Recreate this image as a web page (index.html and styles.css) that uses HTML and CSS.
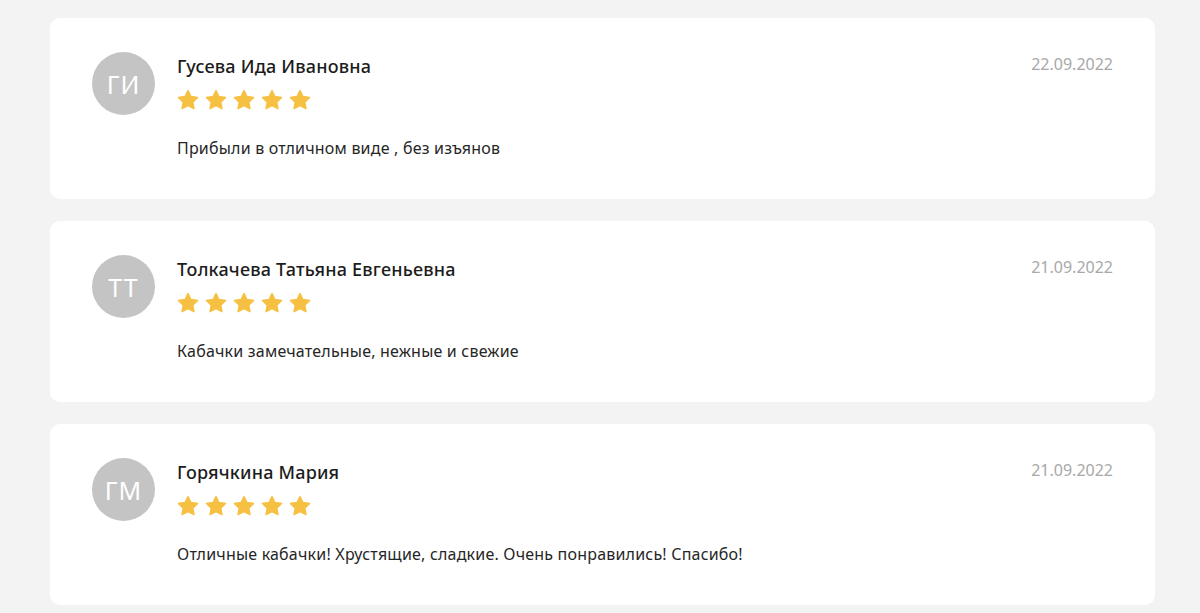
FILE: index.html
```html
<!DOCTYPE html>
<html lang="ru">
<head>
<meta charset="utf-8">
<link rel="stylesheet" href="styles.css">
</head>
<body>
<svg width="0" height="0" class="defs">
  <defs>
    <symbol id="star" viewBox="0 0 24 24">
      <path d="M12 1.6l3.2 6.6 7.2 1-5.2 5.1 1.3 7.2L12 18.1l-6.5 3.4 1.3-7.2-5.2-5.1 7.2-1z" stroke-linejoin="round" stroke-width="1.6" stroke="#f6c142" fill="#f6c142"/>
    </symbol>
  </defs>
</svg>
<div class="list">
  <div class="card">
    <div class="avatar">ГИ</div>
    <div class="body">
      <div class="name">Гусева Ида Ивановна</div>
      <div class="stars"><svg><use href="#star"/></svg><svg><use href="#star"/></svg><svg><use href="#star"/></svg><svg><use href="#star"/></svg><svg><use href="#star"/></svg></div>
      <div class="text">Прибыли в отличном виде , без изъянов</div>
    </div>
    <div class="date">22.09.2022</div>
  </div>
  <div class="card">
    <div class="avatar">ТТ</div>
    <div class="body">
      <div class="name">Толкачева Татьяна Евгеньевна</div>
      <div class="stars"><svg><use href="#star"/></svg><svg><use href="#star"/></svg><svg><use href="#star"/></svg><svg><use href="#star"/></svg><svg><use href="#star"/></svg></div>
      <div class="text">Кабачки замечательные, нежные и свежие</div>
    </div>
    <div class="date">21.09.2022</div>
  </div>
  <div class="card">
    <div class="avatar">ГМ</div>
    <div class="body">
      <div class="name">Горячкина Мария</div>
      <div class="stars"><svg><use href="#star"/></svg><svg><use href="#star"/></svg><svg><use href="#star"/></svg><svg><use href="#star"/></svg><svg><use href="#star"/></svg></div>
      <div class="text">Отличные кабачки! Хрустящие, сладкие. Очень понравились! Спасибо!</div>
    </div>
    <div class="date">21.09.2022</div>
  </div>
</div>
</body>
</html>
```
FILE: styles.css
```css
html, body {
  margin: 0;
  background: #f3f3f3;
  font-family: "Noto Sans", "Liberation Sans", sans-serif;
  color: #1f1f1f;
}
.defs { position: absolute; }
.list {
  display: flex;
  flex-direction: column;
  gap: 22px;
  padding: 18px 45px 0 50px;
}
.card {
  background: #fff;
  border-radius: 10px;
  display: flex;
  align-items: flex-start;
  padding: 34px 42px 39px 42px;
}
.avatar {
  width: 63px;
  height: 63px;
  border-radius: 50%;
  background: #c4c4c4;
  color: #fff;
  font-size: 25px;
  font-weight: 400;
  letter-spacing: 1px;
  display: flex;
  align-items: center;
  justify-content: center;
  margin-right: 22px;
  flex: none;
}
.body {
  flex: 1;
}
.name {
  font-size: 18px;
  font-weight: 500;
  line-height: 28px;
  letter-spacing: 0.2px;
  color: #1c1c1c;
}
.stars {
  display: flex;
  gap: 6px;
  margin-top: 9px;
  height: 22px;
}
.stars svg {
  width: 22px;
  height: 22px;
}
.text {
  margin-top: 25px;
  font-size: 16px;
  line-height: 24px;
  letter-spacing: 0.2px;
  color: #262626;
}
.date {
  font-size: 16px;
  line-height: 24px;
  color: #a8a8a8;
  flex: none;
}
```
